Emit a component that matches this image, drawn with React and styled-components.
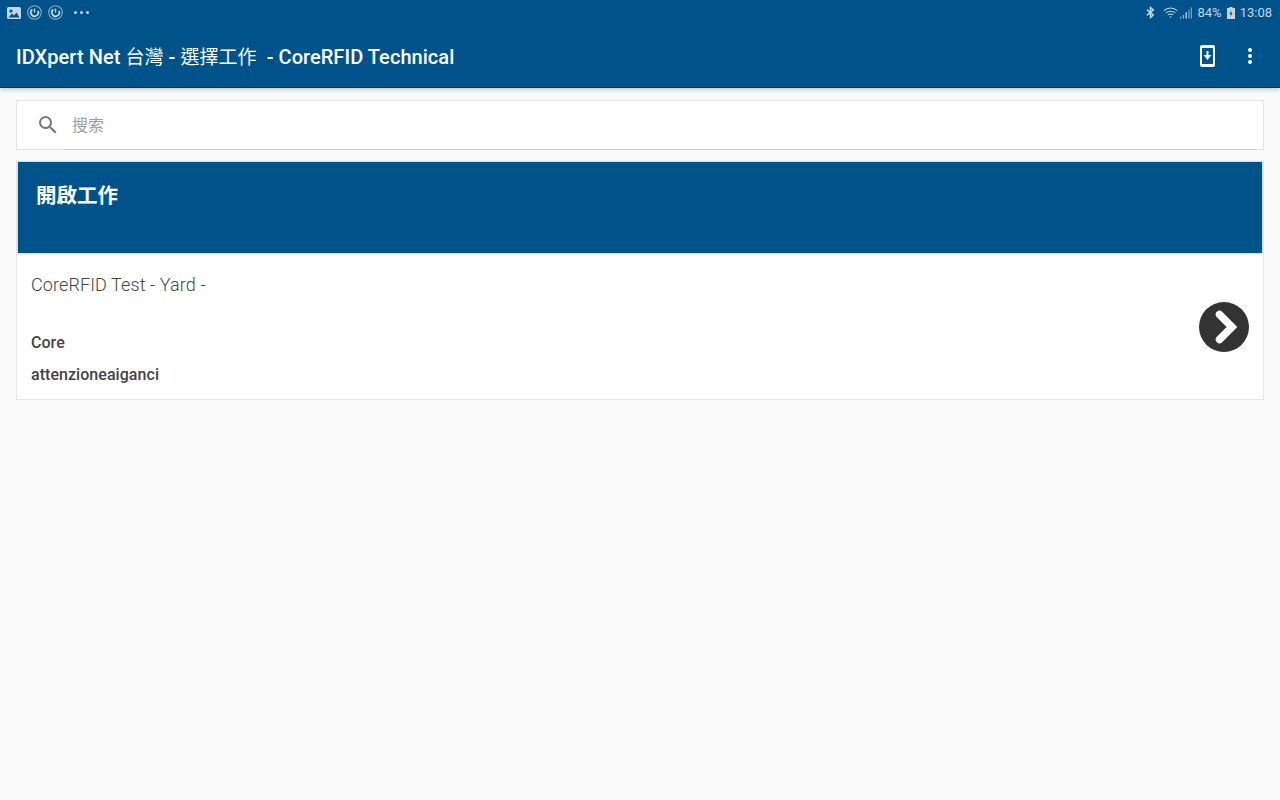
import { useState } from "react";
import styled, { createGlobalStyle } from "styled-components";

const FONT = `Roboto, "Noto Sans CJK TC", sans-serif`;

export default function App() {
  const [query, setQuery] = useState("");
  return (
    <Screen>
      <GlobalStyle />
      <Header>
        <StatusBar>
          <StatusGroup>
            <svg width="14" height="12" viewBox="0 0 14 12">
              <rect width="14" height="12" rx="1.5" fill="#c4d6e4" />
              <circle cx="4" cy="4" r="1.6" fill="#00538a" />
              <path d="M1.5 10.5 L5 6.5 L7 8.5 L9.5 5.5 L12.5 10.5 Z" fill="#00538a" />
            </svg>
            <SyncIcon />
            <SyncIcon />
            <Dots>
              <i />
              <i />
              <i />
            </Dots>
          </StatusGroup>
          <StatusGroup>
            <Bluetooth width="9" height="13" viewBox="0 0 10 14" fill="none" stroke="#c4d6e4" strokeWidth="1.6">
              <path d="M1 3.8 L8.2 9.8 L5 12.6 V1.4 L8.2 4.2 L1 10.2" />
            </Bluetooth>
            <WifiSignal>
              <svg width="16" height="13" viewBox="0 0 18 14" fill="none" stroke="#c4d6e4" strokeWidth="1.2">
                <path d="M1 5 C5 1 12 1 16 5" />
                <path d="M3.2 7.4 C6 5 11 5 13.8 7.4" />
                <path d="M5.6 9.6 C7.4 8.4 9.6 8.4 11.4 9.6" />
                <circle cx="8.5" cy="12" r="0.9" fill="#c4d6e4" stroke="none" />
              </svg>
              <svg width="12" height="12" viewBox="0 0 13 12" fill="#c4d6e4">
                <rect x="0" y="10" width="1.4" height="2" opacity="0.7" />
                <rect x="3" y="8" width="1.4" height="4" opacity="0.7" />
                <rect x="6" y="5" width="1.4" height="7" />
                <rect x="9" y="2.5" width="1.4" height="9.5" opacity="0.6" />
                <rect x="11.6" y="0" width="1.4" height="12" opacity="0.6" />
              </svg>
            </WifiSignal>
            <StatusText>84%</StatusText>
            <svg width="8" height="12" viewBox="0 0 8 12">
              <path d="M2.5 0 H5.5 V1 H8 V12 H0 V1 H2.5 Z" fill="#c4d6e4" />
              <path d="M4.6 3 L2.4 7 H3.8 L3.4 10 L5.6 6 H4.2 Z" fill="#00538a" />
            </svg>
            <StatusText>13:08</StatusText>
          </StatusGroup>
        </StatusBar>
        <Toolbar>
          <Title>
            IDXpert Net <Cjk>台灣</Cjk> - <Cjk>選擇工作</Cjk>&nbsp; - CoreRFID Technical
          </Title>
          <Actions>
            <svg width="15" height="22" viewBox="0 0 15 22">
              <rect width="15" height="22" rx="2" fill="#fff" />
              <rect x="2" y="3" width="11" height="16" fill="#00538a" />
              <path d="M6.5 6 H8.5 V10 H11.5 L7.5 15 L3.5 10 H6.5 Z" fill="#fff" />
            </svg>
            <Kebab>
              <i />
              <i />
              <i />
            </Kebab>
          </Actions>
        </Toolbar>
      </Header>
      <Content>
        <SearchBox>
          <svg width="24" height="24" viewBox="0 0 24 24" fill="#757575">
            <path d="M15.5 14h-.79l-.28-.27A6.47 6.47 0 0 0 16 9.5 6.5 6.5 0 1 0 9.5 16c1.61 0 3.09-.59 4.23-1.57l.27.28v.79l5 4.99L20.49 19l-4.99-5zm-6 0C7.01 14 5 11.99 5 9.5S7.01 5 9.5 5 14 7.01 14 9.5 11.99 14 9.5 14z" />
          </svg>
          <SearchField>
            <SearchInput
              placeholder="搜索"
              value={query}
              onChange={(e) => setQuery(e.target.value)}
            />
          </SearchField>
        </SearchBox>
        <JobCard>
          <CardHead>開啟工作</CardHead>
          <JobRow>
            <JobInfo>
              <JobName>CoreRFID Test - Yard -</JobName>
              <JobLabel>Core</JobLabel>
              <JobLabel>attenzioneaiganci</JobLabel>
            </JobInfo>
            <GoButton aria-label="open">
              <svg width="50" height="50" viewBox="0 0 50 50">
                <circle cx="25" cy="25" r="25" fill="#333333" />
                <path
                  d="M20.5 12.5 L33 25 L20.5 37.5"
                  fill="none"
                  stroke="#fff"
                  strokeWidth="7.5"
                  strokeLinecap="round"
                  strokeLinejoin="miter"
                />
              </svg>
            </GoButton>
          </JobRow>
        </JobCard>
      </Content>
    </Screen>
  );
}

const GlobalStyle = createGlobalStyle`
  html, body {
    margin: 0;
    padding: 0;
    background: #fafafa;
  }
  * {
    box-sizing: border-box;
  }
`;

const Screen = styled.div`
  width: 1280px;
  height: 800px;
  overflow: hidden;
  background: #fafafa;
  font-family: ${FONT};
`;

const Header = styled.header`
  height: 88px;
  background: #00538a;
  border-bottom: 1px solid #0a2f6e;
  box-shadow: 0 2px 4px rgba(0, 0, 0, 0.18);
`;

const StatusBar = styled.div`
  height: 25px;
  padding: 0 8px 0 7px;
  display: flex;
  justify-content: space-between;
  align-items: center;
`;

const StatusGroup = styled.div`
  display: flex;
  align-items: center;
  gap: 5px;
`;

const Bluetooth = styled.svg`
  margin-right: 3px;
`;

const WifiSignal = styled.div`
  display: flex;
  align-items: center;
  gap: 1px;
`;

const StatusText = styled.span`
  font-size: 13px;
  color: #c4d6e4;
`;

const Dots = styled.div`
  display: flex;
  gap: 3px;
  margin-left: 6px;

  i {
    width: 3px;
    height: 3px;
    border-radius: 50%;
    background: #c4d6e4;
  }
`;

const SyncRing = styled.svg`
  display: block;
  margin-left: 1px;
`;

function SyncIcon() {
  return (
    <SyncRing width="15" height="15" viewBox="0 0 15 15" fill="none" stroke="#c4d6e4">
      <circle cx="7.5" cy="7.5" r="6.8" strokeWidth="1.1" opacity="0.7" />
      <path d="M7.5 3.6 V7.5" strokeWidth="1.4" />
      <path d="M5.4 4.6 A3.7 3.7 0 1 0 10.9 6" strokeWidth="1.8" />
    </SyncRing>
  );
}

const Toolbar = styled.div`
  height: 62px;
  padding: 0 28px 0 16px;
  display: flex;
  justify-content: space-between;
  align-items: center;
`;

const Title = styled.h1`
  margin: 0 0 1px;
  font-size: 20px;
  letter-spacing: 0.05px;
  font-weight: 500;
  color: #fff;
  white-space: nowrap;
`;

const Cjk = styled.span`
  font-size: 19px;
  font-weight: 400;
`;

const Actions = styled.div`
  display: flex;
  align-items: center;
  gap: 33px;
`;

const Kebab = styled.div`
  display: flex;
  flex-direction: column;
  gap: 2px;

  i {
    width: 4px;
    height: 4px;
    border-radius: 50%;
    background: #fff;
  }
`;

const Content = styled.main`
  padding: 12px 16px 0;
  display: flex;
  flex-direction: column;
  gap: 11px;
`;

const SearchBox = styled.div`
  height: 50px;
  padding: 0 7px 0 19px;
  display: flex;
  align-items: center;
  gap: 4px;
  background: #fff;
  border: 1px solid #e4e4e4;
`;

const SearchField = styled.div`
  flex: 1;
  height: 49px;
  margin-top: 1px;
  padding-left: 8px;
  border-bottom: 1px solid #c8c8c8;
`;

const SearchInput = styled.input`
  width: 100%;
  height: 100%;
  padding: 0;
  border: 0;
  outline: none;
  background: transparent;
  font-family: ${FONT};
  font-size: 16px;
  color: #333;

  &::placeholder {
    color: #9e9e9e;
  }
`;

const JobCard = styled.section`
  background: #fff;
  border: 1px solid #e6e6e6;
`;

const CardHead = styled.h2`
  height: 91px;
  margin: 0 1px 2px;
  padding: 20px 18px 0;
  background: #00538a;
  box-shadow: 0 0 1px 1px #d0e2ef;
  font-size: 20.5px;
  line-height: 28px;
  font-weight: 700;
  color: #fff;
`;

const JobRow = styled.div`
  height: 144px;
  padding: 0 14px;
  display: flex;
  justify-content: space-between;
  align-items: center;
`;

const JobInfo = styled.div`
  display: flex;
  flex-direction: column;
  height: 100%;
  padding-top: 19px;
`;

const JobName = styled.div`
  height: 58px;
  font-size: 18px;
  line-height: 22px;
  letter-spacing: 0.1px;
  font-weight: 300;
  color: #444;
`;

const JobLabel = styled.div`
  height: 32px;
  font-size: 16px;
  line-height: 22px;
  letter-spacing: 0.05px;
  font-weight: 500;
  color: #444;
`;

const GoButton = styled.button`
  width: 50px;
  height: 50px;
  padding: 0;
  border: 0;
  background: none;

  svg {
    display: block;
  }
`;
